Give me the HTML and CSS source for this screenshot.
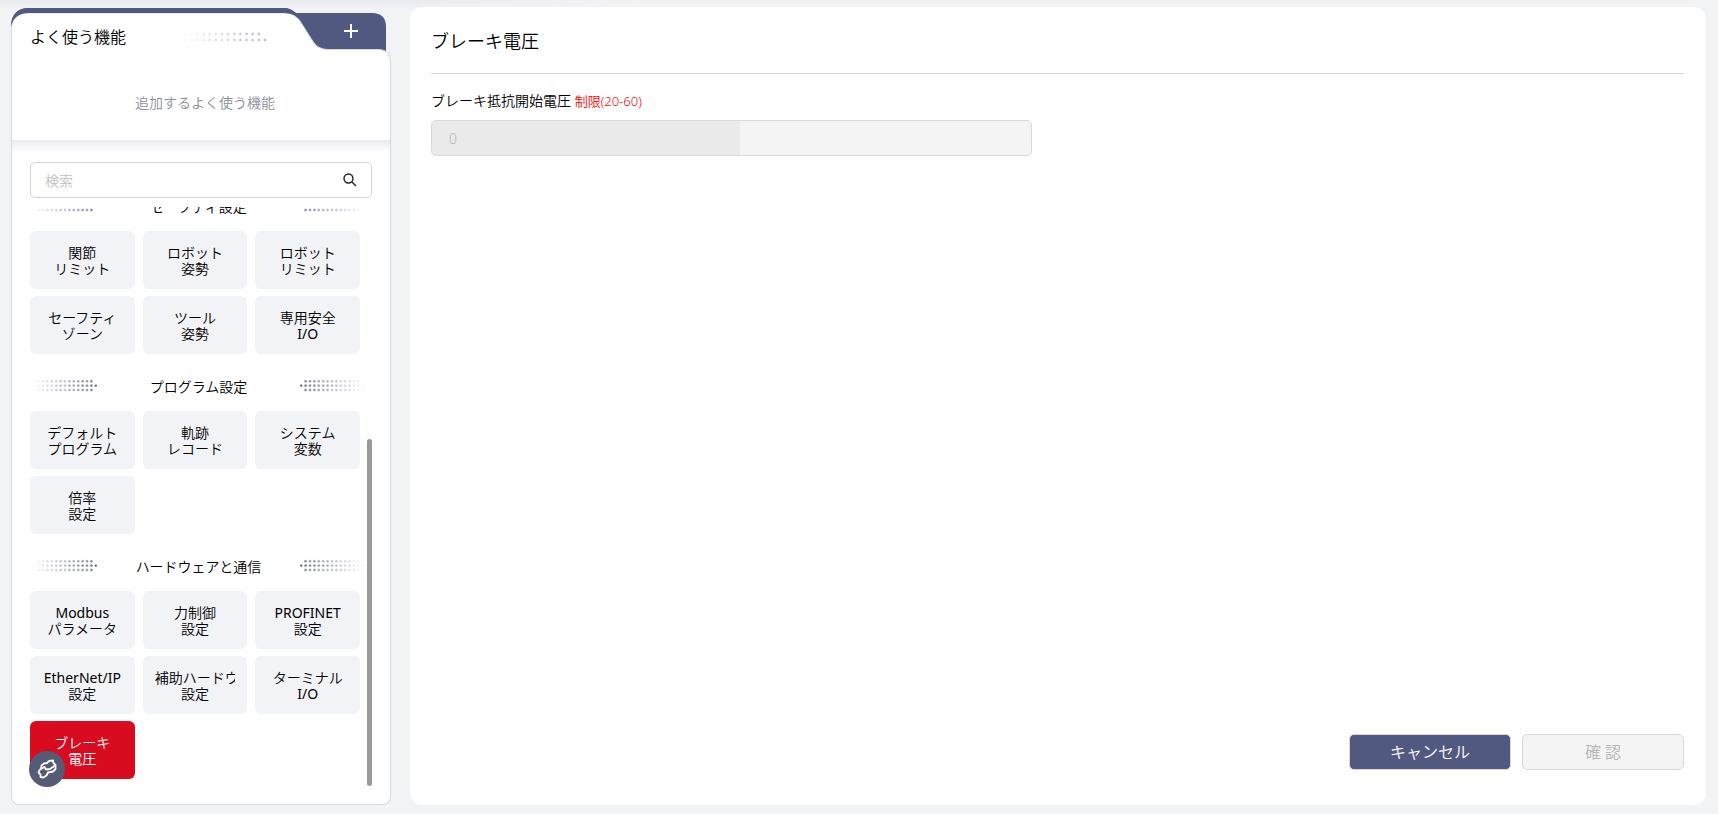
FILE: index.html
```html
<!DOCTYPE html>
<html lang="ja">

<head>
    <meta charset="utf-8">
    <title>ブレーキ電圧</title>
    <link rel="stylesheet" href="styles.css">
</head>

<body>
    <svg class="defs" aria-hidden="true">
        <defs>
            <pattern id="dot" width="4.4" height="4.4" patternUnits="userSpaceOnUse">
                <circle cx="2.2" cy="2.2" r="1.2" fill="#525980" />
            </pattern>
            <pattern id="bigdot" width="6.15" height="6" patternUnits="userSpaceOnUse">
                <circle cx="3" cy="3" r="1.4" fill="#525980" />
            </pattern>
            <symbol id="dots" viewBox="0 0 66 14">
                <rect x="0" y="0" width="61.6" height="13.2" fill="url(#dot)" />
                <circle cx="63.8" cy="6.6" r="1.2" fill="#525980" />
            </symbol>
        </defs>
    </svg>

    <aside class="sidebar">
        <div class="favorites">
            <svg class="tab-shape" viewBox="0 0 380 56" aria-hidden="true">
                <path d="M0 20 C0 7 6 0 18 0 H272 C278 0 281 2 285 5 H361 Q375 5 375 19 V44 H0 Z" fill="#525980" />
                <path d="M0.5 56 V20 C1 10 8 5 17 5 H271 C280 5 285 7 289 13 L301 32 C305 38 308 41 317 41.5 H368 Q379.500 42 379.500 54 V56" fill="#fff" stroke="#d5d8e0" stroke-width="1" />
                <path d="M0 18 C0 7 6 0 18 0 H272 C278 0 281 2 285 5 L288 11 C284 7 280 5 271 5 H17 C8 5 2 10 0 18 Z" fill="#525980" />
            </svg>
            <div class="tab-row">
                <h2>よく使う機能</h2>
                <svg class="title-dots" viewBox="0 0 86 12" aria-hidden="true">
                    <rect x="0" y="0" width="80" height="6" fill="url(#bigdot)" />
                    <rect x="0" y="6" width="86" height="6" fill="url(#bigdot)" />
                </svg>
                <button class="add" type="button" aria-label="追加">
                    <svg viewBox="0 0 16 16"><path d="M8 1 V15 M1 8 H15" stroke="#fff" stroke-width="2" /></svg>
                </button>
            </div>
            <p class="empty">追加するよく使う機能</p>
        </div>

        <div class="menu">
            <div class="search">
                <input type="text" placeholder="検索" aria-label="検索">
                <svg viewBox="0 0 14 14"><circle cx="5.500" cy="5.500" r="4.500" /><path d="M8.800 8.800 L13 13" /></svg>
            </div>

            <div class="scroll">
                <div class="groups">
                    <section>
                        <h3><svg class="dots"><use href="#dots" /></svg>セーフティ設定<svg class="dots flip"><use href="#dots" /></svg></h3>
                        <div class="grid">
                            <button type="button"><span>関節</span><span>リミット</span></button>
                            <button type="button"><span>ロボット</span><span>姿勢</span></button>
                            <button type="button"><span>ロボット</span><span>リミット</span></button>
                            <button type="button"><span>セーフティ</span><span>ゾーン</span></button>
                            <button type="button"><span>ツール</span><span>姿勢</span></button>
                            <button type="button"><span>専用安全</span><span class="latin">I/O</span></button>
                        </div>
                    </section>
                    <section>
                        <h3><svg class="dots"><use href="#dots" /></svg>プログラム設定<svg class="dots flip"><use href="#dots" /></svg></h3>
                        <div class="grid">
                            <button type="button"><span>デフォルト</span><span>プログラム</span></button>
                            <button type="button"><span>軌跡</span><span>レコード</span></button>
                            <button type="button"><span>システム</span><span>変数</span></button>
                            <button type="button"><span>倍率</span><span>設定</span></button>
                        </div>
                    </section>
                    <section>
                        <h3><svg class="dots"><use href="#dots" /></svg>ハードウェアと通信<svg class="dots flip"><use href="#dots" /></svg></h3>
                        <div class="grid">
                            <button type="button"><span class="latin">Modbus</span><span>パラメータ</span></button>
                            <button type="button"><span>力制御</span><span>設定</span></button>
                            <button type="button"><span class="latin">PROFINET</span><span>設定</span></button>
                            <button type="button"><span class="latin">EtherNet/IP</span><span>設定</span></button>
                            <button type="button"><span class="clip">補助ハードウ</span><span>設定</span></button>
                            <button type="button"><span>ターミナル</span><span class="latin">I/O</span></button>
                            <button type="button" class="active"><span>ブレーキ</span><span>電圧</span></button>
                        </div>
                    </section>
                </div>
                <div class="scrollbar"></div>
            </div>
        </div>

        <button class="robot" type="button" aria-label="ロボット">
            <svg viewBox="0 0 20 20">
                <path d="M4 10 L4.500 6.500 L7 4.500 L10 4 L12 2 L16 1.500 L16.500 4 L18.500 6 L18.500 10 L16 12.500 L11 13.500 L9.500 16.500 L6.500 18.500 L3.500 18 L3.500 15.500 L1.500 13.500 L2.500 11 Z" />
                <path d="M4 10 L7.500 8 L9 10.500 L13 10 L18 6.500" />
            </svg>
        </button>
    </aside>

    <main class="panel">
        <h1>ブレーキ電圧</h1>
        <form class="setting">
            <label for="voltage">ブレーキ抵抗開始電圧 <small>制限(20-60)</small></label>
            <input id="voltage" type="text" value="0" disabled>
        </form>
        <div class="actions">
            <button type="button" class="cancel">キャンセル</button>
            <button type="button" class="ok" disabled>確 認</button>
        </div>
    </main>
</body>

</html>
```

FILE: styles.css
```css
* {
    box-sizing: border-box;
}

body {
    display: flex;
    gap: 19px;
    height: 100vh;
    margin: 0;
    padding: 7px 12px 9px 11px;
    background: linear-gradient(90deg, transparent 400px, #f2f3f5 640px), linear-gradient(#e8eaef, #f2f3f5 9px);
    font-family: "Noto Sans", "Noto Sans CJK JP", sans-serif;
    font-size: 14px;
    font-weight: 350;
    color: #000;
}

h1, h2, h3, p {
    margin: 0;
    font-weight: 350;
}

button, input {
    font: inherit;
}

button {
    padding: 0;
    border: none;
}

.defs {
    position: absolute;
    width: 0;
    height: 0;
}

/* left side */
.sidebar {
    position: relative;
    display: flex;
    flex-direction: column;
    flex: 0 0 380px;
    padding-top: 1px;
}

.favorites {
    position: relative;
    height: 132px;
}

.tab-shape {
    position: absolute;
    top: 0;
    left: 0;
    width: 100%;
    z-index: 1;
}

.favorites::after {
    content: "";
    position: absolute;
    top: 55px;
    right: 0;
    bottom: 0;
    left: 0;
    background: #fff;
    border: 1px solid #d5d8e0;
    border-width: 0 1px;
}

.tab-row {
    position: relative;
    z-index: 2;
    display: flex;
    align-items: center;
    height: 42px;
    padding: 4px 5px 0 19px;
}

.tab-row h2 {
    flex: 1;
    padding-top: 12px;
    font-size: 16px;
    line-height: 24px;
}

.title-dots {
    width: 86px;
    height: 12px;
    margin: 12px 48px 0 0;
    opacity: 0.4;
    mask-image: linear-gradient(90deg, transparent, #000);
}

.add {
    width: 70px;
    height: 36px;
    background: none;
}

.add svg {
    display: block;
    width: 16px;
    height: 16px;
    margin: auto;
}

.empty {
    position: relative;
    z-index: 2;
    margin-top: 42px;
    padding-left: 8px;
    line-height: 22px;
    text-align: center;
    color: #8d909f;
}

.menu {
    display: flex;
    flex: 1;
    flex-direction: column;
    min-height: 0;
    padding: 22px 18px 18px;
    border: 1px solid #d5d8e0;
    border-top: none;
    border-radius: 0 0 8px 8px;
    background: linear-gradient(#e8eaef, #fff 12px);
}

.search {
    display: flex;
    align-items: center;
    flex: 0 0 36px;
    padding-right: 14px;
    border: 1px solid #d5d5d5;
    border-radius: 5px;
    background: #fff;
}

.search input {
    flex: 1;
    min-width: 0;
    padding: 0 14px;
    border: none;
    outline: none;
    background: none;
}

.search input::placeholder {
    color: #bfbfbf;
}

.search svg {
    width: 14px;
    height: 14px;
    fill: none;
    stroke: #222;
    stroke-width: 1.4;
}

.scroll {
    display: flex;
    flex: 1;
    min-height: 0;
    margin-top: 9px;
}

.groups {
    display: flex;
    flex: 1;
    flex-direction: column;
    justify-content: flex-end;
    overflow: hidden;
    padding: 0 7px 7px 0;
}

.scrollbar {
    align-self: flex-end;
    width: 5px;
    height: 60%;
    border-radius: 3px;
    background: #999;
}

h3 {
    display: flex;
    align-items: center;
    justify-content: space-between;
    height: 57px;
    margin: 0 -5px 0 2px;
    padding-top: 7px;
    font-size: 14px;
}

.dots {
    width: 66px;
    height: 14px;
    mask-image: linear-gradient(90deg, transparent, #000);
}

.flip {
    transform: scaleX(-1);
}

.grid {
    display: grid;
    grid-template-columns: repeat(3, minmax(0, 1fr));
    gap: 7px 8px;
}

.grid button {
    height: 58px;
    padding: 2px 12px 0;
    border-radius: 6px;
    background: #f2f3f7;
    color: #000;
    line-height: 16px;
}

.grid span {
    display: block;
    white-space: nowrap;
}

.grid .latin {
    font-weight: 400;
}

.grid .clip {
    overflow: hidden;
}

.grid .active {
    background: #d90b1e;
    color: #fff;
}

.robot {
    position: absolute;
    left: 18px;
    bottom: 18px;
    width: 36px;
    height: 36px;
    border-radius: 50%;
    background: #555b74;
}

.robot svg {
    display: block;
    width: 20px;
    height: 20px;
    margin: auto;
    fill: none;
    stroke: #fff;
    stroke-width: 1.8;
    stroke-linejoin: round;
}

/* right side */
.panel {
    display: flex;
    flex: 1;
    flex-direction: column;
    padding: 0 22px 35px 21px;
    border-radius: 12px;
    background: #fff;
}

.panel h1 {
    height: 67px;
    border-bottom: 1px solid #d8d8d8;
    font-size: 18px;
    line-height: 68px;
}

.setting {
    display: flex;
    flex: 1;
    flex-direction: column;
    align-items: flex-start;
    padding-top: 16px;
}

.setting label {
    margin-bottom: 8px;
    line-height: 22px;
}

.setting small {
    font-size: 13px;
    color: #f00;
}

.setting input {
    width: 48%;
    height: 36px;
    padding: 0 17px;
    border: 1px solid #d9d9d9;
    border-radius: 5px;
    background: linear-gradient(90deg, #eaeaea 308px, #f4f4f4 308px);
    color: #b5b5b5;
}

.actions {
    display: flex;
    justify-content: flex-end;
    gap: 11px;
}

.actions button {
    width: 162px;
    height: 36px;
    padding-bottom: 2px;
    border: 1px solid #d9d9d9;
    border-radius: 5px;
    font-size: 16px;
}

.actions .cancel {
    background: #525980;
    color: #fff;
}

.actions .ok {
    background: #f4f4f4;
    color: #b5b5b5;
}
```
